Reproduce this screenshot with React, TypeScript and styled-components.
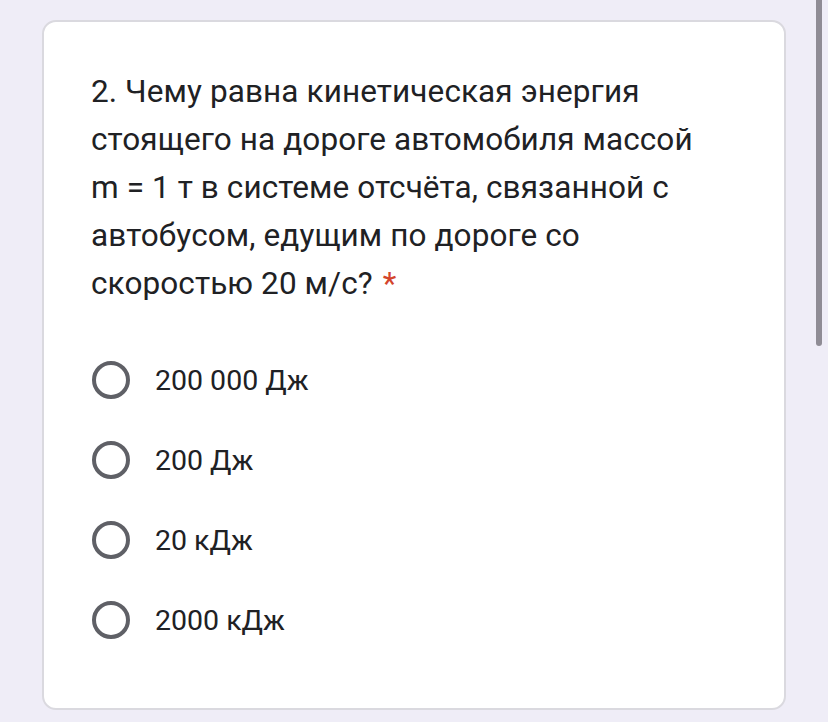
import styled, { createGlobalStyle } from "styled-components"

const GlobalStyle = createGlobalStyle`
    html, body {
        margin: 0;
        padding: 0;
        background: #efedf7;
        overflow: hidden;
    }
`

const Page = styled.div`
    position: relative;
    width: 828px;
    height: 722px;
    background: #efedf7;
    padding: 20px 0 0 42px;
    box-sizing: border-box;
`

const ScrollThumb = styled.div`
    position: absolute;
    top: 0;
    left: 816px;
    width: 6px;
    height: 346px;
    background: #8f8c95;
    border-radius: 0 0 3px 3px;
`

const Card = styled.div`
    width: 744px;
    height: 690px;
    box-sizing: border-box;
    background: #ffffff;
    border: 2px solid #dad9df;
    border-radius: 14px;
    padding: 46px 48px 0 47px;
    display: flex;
    flex-direction: column;
`

const Question = styled.p`
    margin: 0;
    font-family: Roboto, "Open Sans", sans-serif;
    font-size: 31.5px;
    line-height: 48px;
    color: #202124;
    letter-spacing: 0.1px;
    width: 605px;
`

const Required = styled.span`
    display: inline-block;
    color: #d4452c;
    margin-left: 10px;
`

const Options = styled.div`
    display: flex;
    flex-direction: column;
    gap: 40px;
    margin-top: 52px;
`

const Option = styled.label`
    display: flex;
    align-items: center;
    gap: 25px;
    height: 40px;
    font-family: Roboto, sans-serif;
    font-size: 28.5px;
    color: #202124;
`

const Radio = styled.span`
    width: 38px;
    height: 38px;
    box-sizing: border-box;
    border: 4px solid #5f6066;
    border-radius: 50%;
    margin-left: 1px;
    flex: none;
`

const answers = ["200 000 Дж", "200 Дж", "20 кДж", "2000 кДж"]

export default function App() {
    return (
        <Page>
            <GlobalStyle />
            <Card>
                <Question>
                    <span>
                        2. Чему равна кинетическая энергия стоящего на дороге автомобиля массой m = 1 т в системе
                        отсчёта, связанной с автобусом, едущим по дороге со скоростью 20 м/с?
                    </span>
                    <Required>*</Required>
                </Question>
                <Options>
                    {answers.map(a => (
                        <Option key={a}>
                            <Radio />
                            {a}
                        </Option>
                    ))}
                </Options>
            </Card>
            <ScrollThumb />
        </Page>
    )
}
